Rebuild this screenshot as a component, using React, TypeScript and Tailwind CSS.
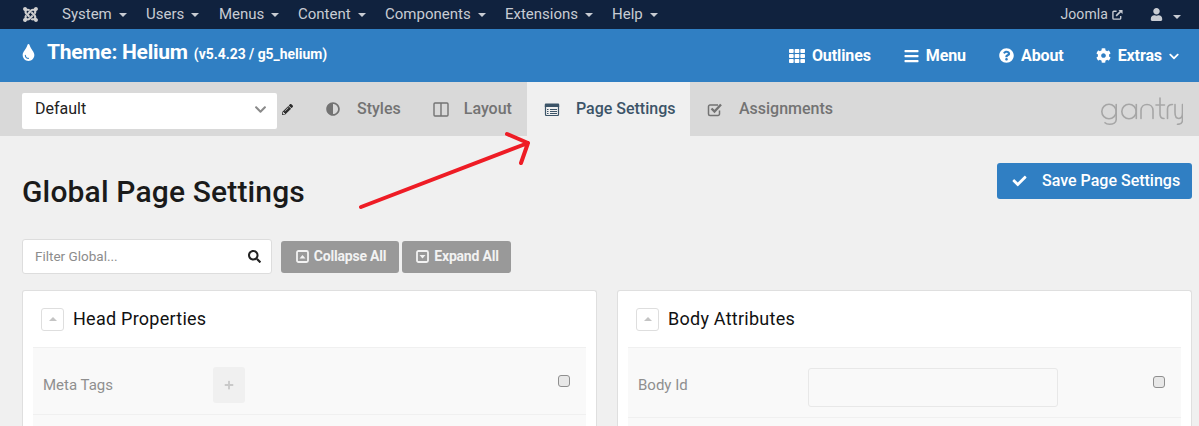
import {
  FaJoomla,
  FaTint,
  FaTh,
  FaBars,
  FaQuestionCircle,
  FaCog,
  FaChevronDown,
  FaAdjust,
  FaPencilAlt,
  FaUser,
  FaSearch,
  FaCheck,
  FaPlus,
} from "react-icons/fa";
import type { ReactNode } from "react";

const NAV_ITEMS = [
  { label: "System", width: "w-[84px]" },
  { label: "Users", width: "w-[73px]" },
  { label: "Menus", width: "w-[79px]" },
  { label: "Content", width: "w-[87px]" },
  { label: "Components", width: "w-[120px]" },
  { label: "Extensions", width: "w-[107px]" },
  { label: "Help", width: "w-[60px]" },
];

function Caret() {
  return (
    <span className="ml-[7px] mt-[1px] inline-block h-0 w-0 border-x-[4px] border-t-[4px] border-x-transparent border-t-[#c8ccd3]" />
  );
}

function ExternalIcon() {
  return (
    <svg viewBox="0 0 12 12" className="ml-[4px] h-[11px] w-[11px]" fill="none" stroke="currentColor">
      <path d="M9.500 7.500V10a1 1 0 0 1-1 1H2a1 1 0 0 1-1-1V3.500a1 1 0 0 1 1-1h3" strokeWidth="1.500" />
      <path d="M4.500 7.500 10 2" strokeWidth="1.800" />
      <path d="M7 1h4.500v4.500z" fill="currentColor" stroke="none" />
    </svg>
  );
}

function TopBar() {
  return (
    <div className="flex h-[29px] items-center bg-[#10223e] text-[15px] text-[#c8ccd3]">
      <div className="flex w-[62px] justify-center pr-[1px]">
        <FaJoomla className="h-[17px] w-[17px] text-[#d0d0d0]" />
      </div>
      {NAV_ITEMS.map((item) => (
        <div key={item.label} className={`flex items-center ${item.width}`}>
          {item.label}
          <Caret />
        </div>
      ))}
      <div className="ml-auto flex items-center pr-[18px]">
        <span className="text-[14px] tracking-[0.1px]">Joomla</span>
        <ExternalIcon />
        <FaUser className="ml-[27px] h-[13px] w-[13px]" />
        <span className="ml-[3px]">
          <Caret />
        </span>
      </div>
    </div>
  );
}

function HeaderLink({ icon, label }: { icon: ReactNode; label: string }) {
  return (
    <div className="flex items-center gap-[7px]">
      {icon}
      <span>{label}</span>
    </div>
  );
}

function ThemeHeader() {
  return (
    <div className="flex h-[53px] items-center bg-[#307fc3] pl-[22px] pr-[19px] text-white">
      <div className="mb-[6px] flex items-center">
        <FaTint className="mr-[12px] h-[17px] w-[13px]" />
        <div className="flex items-baseline">
          <span className="text-[21px] font-bold tracking-[-0.25px]">Theme: Helium</span>
          <span className="ml-[6px] text-[13.900px] font-bold">(v5.4.23 / g5_helium)</span>
        </div>
      </div>
      <div className="ml-auto flex items-center gap-[33px] text-[16px] font-bold tracking-[-0.1px]">
        <HeaderLink icon={<FaTh className="h-[16px] w-[16px]" />} label="Outlines" />
        <HeaderLink icon={<FaBars className="h-[16px] w-[15px]" />} label="Menu" />
        <HeaderLink icon={<FaQuestionCircle className="h-[15px] w-[15px]" />} label="About" />
        <div className="ml-[-1px] flex items-center gap-[7px]">
          <FaCog className="h-[15px] w-[15px]" />
          <span>Extras</span>
          <FaChevronDown className="ml-[-1px] mt-[2px] h-[11px] w-[12px]" />
        </div>
      </div>
    </div>
  );
}

function LayoutIcon() {
  return (
    <svg viewBox="0 0 16 15" className="h-[15px] w-[16px]" fill="none" stroke="currentColor" strokeWidth="1.400">
      <rect x="1" y="1" width="14" height="13" rx="1" />
      <path d="M8 1v13" />
    </svg>
  );
}

function ListIcon() {
  return (
    <svg viewBox="0 0 16 13" className="h-[13px] w-[16px]" fill="none" stroke="currentColor">
      <path d="M1.500 3h13v8.500a1 1 0 0 1-1 1h-11a1 1 0 0 1-1-1z" strokeWidth="1.200" />
      <path d="M.8 4V1.500a1 1 0 0 1 1-1h12.400a1 1 0 0 1 1 1V4z" fill="currentColor" stroke="none" />
      <path d="M3 6.500h1.500M6 6.500h7M3 8.500h1.500M6 8.500h7M3 10.500h1.500M6 10.500h7" strokeWidth="1" />
    </svg>
  );
}

function CheckSquareIcon() {
  return (
    <svg viewBox="0 0 16 15" className="h-[15px] w-[16px]" fill="none" stroke="currentColor">
      <path d="M12.500 8.500V12a1.500 1.500 0 0 1-1.500 1.500H3A1.500 1.500 0 0 1 1.500 12V4.500A1.500 1.500 0 0 1 3 3h8" strokeWidth="1.500" />
      <path d="M4.500 6.500 7.500 9.500 14 2.500" strokeWidth="2.400" />
    </svg>
  );
}

function Tab({
  icon,
  label,
  active,
  className,
}: {
  icon: ReactNode;
  label: string;
  active?: boolean;
  className: string;
}) {
  return (
    <div
      className={`flex h-full items-center text-[16px] font-medium ${className} ${
        active ? "bg-[#f0f0f0] text-[#3c5468]" : "text-[#737373]"
      }`}
    >
      {icon}
      <span>{label}</span>
    </div>
  );
}

function GantryLogo() {
  return (
    <svg viewBox="0 0 82 28" className="h-[28px] w-[82px]" fill="none" stroke="#a6a6a6" strokeWidth="1.600" strokeLinecap="round" aria-label="gantry">
      <circle cx="8" cy="14.500" r="7.200" />
      <path d="M15.200 7.500v15c0 3-3 4.700-6.700 4.700-2 0-3.500-.5-4.500-1.500" />
      <circle cx="28" cy="14.500" r="7.200" />
      <path d="M35.300 7.500v14" />
      <path d="M40 21.500V13.500c0-4 2.800-6 6-6s6 2 6 6v8" />
      <path d="M59 1v16c0 3 1.500 4.500 4 4.500M55 8h8.500" />
      <path d="M66.500 21.500V12c0-3 2-4.500 5-4.500" />
      <path d="M74 7.500v8c0 4 1.500 6 3.800 6s3.700-2 3.700-6v-8M81.500 15v8c0 2.500-2 4.300-5 4.300" />
    </svg>
  );
}

function TabBar() {
  return (
    <div className="flex h-[54px] items-center bg-[#d9d9d9] pl-[22px]">
      <div className="mt-[4px] flex h-[36px] w-[255px] items-center justify-between rounded-[2px] bg-white pb-[4px] pl-[13px] pr-[10px] text-[16px] text-[#222]">
        <span>Default</span>
        <FaChevronDown className="h-[13px] w-[13px] text-[#8a8a8a]" />
      </div>
      <FaPencilAlt className="ml-[5px] h-[11px] w-[11px] text-[#2c2c2c]" />
      <Tab className="ml-[33px] gap-[17px]" icon={<FaAdjust className="h-[14px] w-[14px]" />} label="Styles" />
      <Tab className="ml-[32px] gap-[15px]" icon={<LayoutIcon />} label="Layout" />
      <Tab
        active
        className="ml-[15px] w-[163px] gap-[16px] pl-[17px]"
        icon={<ListIcon />}
        label="Page Settings"
      />
      <Tab className="ml-[17px] gap-[16px]" icon={<CheckSquareIcon />} label="Assignments" />
      <div className="ml-auto pr-[16px] pt-[3px]">
        <GantryLogo />
      </div>
    </div>
  );
}

function ToggleIcon({ down }: { down?: boolean }) {
  return (
    <svg viewBox="0 0 13 13" className="h-[13px] w-[13px]" fill="none" stroke="currentColor" strokeWidth="1.800">
      <rect x="1" y="1" width="11" height="11" rx="1.500" />
      <path d={down ? "M3.500 5h6l-3 3.500z" : "M3.500 8.500h6L6.500 5z"} fill="currentColor" stroke="none" />
    </svg>
  );
}

function ToolbarButton({ icon, label, className }: { icon: ReactNode; label: string; className: string }) {
  return (
    <div
      className={`flex h-[32px] items-center justify-center gap-[5px] rounded-[3px] bg-[#999999] pl-[2px] text-[14px] font-bold tracking-[-0.2px] text-[#f2f2f2] ${className}`}
    >
      {icon}
      <span>{label}</span>
    </div>
  );
}

function PanelTitle({ title }: { title: string }) {
  return (
    <div className="flex h-[56px] items-center pl-[8px]">
      <div className="flex h-[23px] w-[23px] items-center justify-center rounded-[3px] border border-[#dedede] bg-white">
        <span className="h-0 w-0 border-x-[4px] border-b-[4px] border-x-transparent border-b-[#c4c4c4]" />
      </div>
      <span className="mb-[2px] ml-[9px] text-[18px] tracking-[0.25px] text-[#111111]">{title}</span>
    </div>
  );
}

function Checkbox() {
  return <div className="h-[12px] w-[12px] rounded-[3px] border border-[#8f8f8f] bg-[#e8e8e8]" />;
}

function Panel({ title, children }: { title: string; children: ReactNode }) {
  return (
    <div className="w-[575px] rounded-t-[3px] border border-b-0 border-[#dfdfdf] bg-white px-[10px]">
      <PanelTitle title={title} />
      {children}
      <div className="h-[20px] bg-[#f9f9f9]" />
    </div>
  );
}

export default function App() {
  return (
    <div className="relative h-[426px] w-[1199px] overflow-hidden bg-[#f0f0f0] font-['Roboto',sans-serif]">
      <TopBar />
      <ThemeHeader />
      <TabBar />

      <div className="pl-[22px] pr-[7px]">
        <div className="flex items-start justify-between">
          <h1 className="mt-[39px] text-[30px] font-medium leading-[34px] tracking-[0.15px] text-[#1a1a1a]">
            Global Page Settings
          </h1>
          <div className="mt-[27px] flex h-[36px] w-[195px] items-center rounded-[3px] bg-[#307fc3] pl-[15px] text-[16px] font-medium text-white">
            <FaCheck className="mr-[15px] h-[14px] w-[15px]" />
            Save Page Settings
          </div>
        </div>

        <div className="mt-[30px] flex items-center">
          <div className="flex h-[35px] w-[250px] items-center justify-between rounded-[3px] border border-[#dddddd] bg-white pl-[12px] pr-[10px] text-[13.500px] text-[#8c8c8c]">
            <span>Filter Global...</span>
            <FaSearch className="h-[13px] w-[13px] text-[#222]" />
          </div>
          <ToolbarButton className="ml-[9px] w-[118px]" icon={<ToggleIcon />} label="Collapse All" />
          <ToolbarButton className="ml-[3px] w-[109px]" icon={<ToggleIcon down />} label="Expand All" />
        </div>

        <div className="mt-[16px] flex justify-between">
          <Panel title="Head Properties">
            <div className="flex h-[68px] items-center border-y border-[#f0f0f0] bg-[#f9f9f9] pl-[10px] pr-[16px] pt-[8px]">
              <span className="w-[170px] text-[15px] text-[#8f8f8f]">Meta Tags</span>
              <div className="flex h-[36px] w-[32px] items-center justify-center rounded-[3px] bg-[#f0f0f0]">
                <FaPlus className="h-[10px] w-[10px] text-[#c9c9c9]" />
              </div>
              <div className="ml-auto mb-[8px]">
                <Checkbox />
              </div>
            </div>
          </Panel>
          <Panel title="Body Attributes">
            <div className="flex h-[71px] items-center border-y border-[#f0f0f0] bg-[#f9f9f9] pl-[10px] pr-[16px] pt-[10px]">
              <span className="mb-[5px] w-[170px] text-[15px] text-[#8f8f8f]">Body Id</span>
              <div className="h-[39px] w-[250px] rounded-[3px] border border-[#e8e8e8] bg-[#f9f9f9]" />
              <div className="ml-auto mb-[11px]">
                <Checkbox />
              </div>
            </div>
          </Panel>
        </div>
      </div>

      {/* annotation painted over the screenshot */}
      <svg className="pointer-events-none absolute left-[355px] top-[133px] h-[80px] w-[180px] overflow-visible" viewBox="0 0 180 80" fill="none">
        <path d="M6 74 L173 10 M152 1 L173 10 L166 30" stroke="#ee1c25" strokeWidth="4" strokeLinecap="round" strokeLinejoin="round" />
      </svg>
    </div>
  );
}
